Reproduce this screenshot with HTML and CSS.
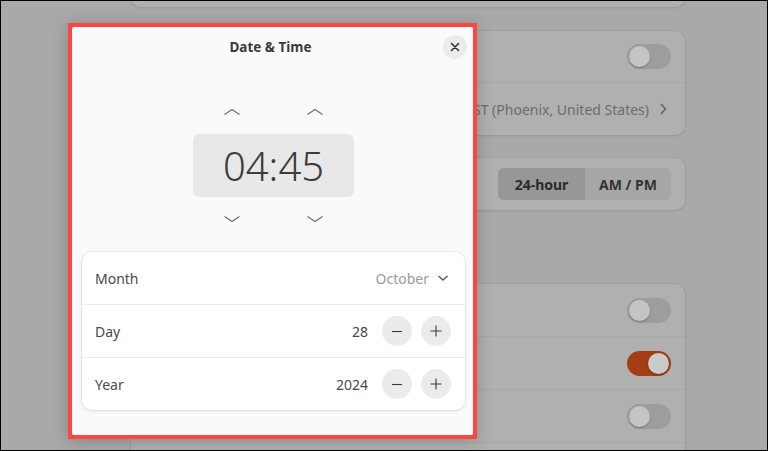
FILE: index.html
```html
<!DOCTYPE html>
<html lang="en">
<head>
<meta charset="utf-8">
<title>Date &amp; Time</title>
<link rel="stylesheet" href="styles.css">
</head>
<body>
<div class="screen">
  <div class="backdrop">
    <div class="cards">
      <section class="card card-top"></section>
      <section class="card card-auto">
        <div class="brow brow-first">
          <span class="grow"></span>
          <span class="switch"><span class="knob"></span></span>
        </div>
        <div class="brow">
          <span class="grow"></span>
          <span class="tz">MST (Phoenix, United States)</span>
          <svg class="tz-chev" width="8" height="12" viewBox="0 0 8 12"><polyline points="2,1 6.5,6 2,11" fill="none" stroke="#5e5e5e" stroke-width="1.3"/></svg>
        </div>
      </section>
      <section class="card card-format">
        <div class="brow brow-first">
          <span class="grow"></span>
          <div class="seg">
            <span class="seg-btn seg-active">24-hour</span>
            <span class="seg-btn">AM / PM</span>
          </div>
        </div>
      </section>
      <section class="card card-switches">
        <div class="brow brow-tall brow-first"><span class="grow"></span><span class="switch"><span class="knob"></span></span></div>
        <div class="brow brow-tall"><span class="grow"></span><span class="switch switch-on"><span class="knob"></span></span></div>
        <div class="brow brow-tall"><span class="grow"></span><span class="switch"><span class="knob"></span></span></div>
        <div class="brow brow-tall"><span class="grow"></span></div>
      </section>
    </div>
  </div>

  <div class="dialog-frame">
    <div class="dialog">
      <header class="dlg-header">
        <span></span>
        <h1 class="dlg-title">Date &amp; Time</h1>
        <button class="close-btn" aria-label="Close">
          <svg width="10" height="10" viewBox="0 0 10 10"><path d="M1.5 1.5 L8.5 8.5 M8.5 1.5 L1.5 8.5" stroke="#2e2e2e" stroke-width="1.5" stroke-linecap="round"/></svg>
        </button>
      </header>

      <div class="time-area">
        <div class="chev-row">
          <button class="chev-btn"><svg width="18" height="8" viewBox="0 0 18 8"><polyline points="1.5,6.5 9,1.5 16.5,6.5" fill="none" stroke="#6f6f6f" stroke-width="1.2"/></svg></button>
          <button class="chev-btn"><svg width="18" height="8" viewBox="0 0 18 8"><polyline points="1.5,6.5 9,1.5 16.5,6.5" fill="none" stroke="#6f6f6f" stroke-width="1.2"/></svg></button>
        </div>
        <div class="time-box">04:45</div>
        <div class="chev-row">
          <button class="chev-btn"><svg width="18" height="8" viewBox="0 0 18 8"><polyline points="1.5,1.5 9,6.5 16.5,1.5" fill="none" stroke="#6f6f6f" stroke-width="1.2"/></svg></button>
          <button class="chev-btn"><svg width="18" height="8" viewBox="0 0 18 8"><polyline points="1.5,1.5 9,6.5 16.5,1.5" fill="none" stroke="#6f6f6f" stroke-width="1.2"/></svg></button>
        </div>
      </div>

      <div class="date-card">
        <div class="drow">
          <span class="dlabel">Month</span>
          <span class="grow"></span>
          <span class="month-val">October</span>
          <svg class="month-chev" width="14" height="8" viewBox="0 0 14 8"><polyline points="2.5,2 7,6 11.5,2" fill="none" stroke="#5a5a5a" stroke-width="1.5"/></svg>
        </div>
        <div class="drow">
          <span class="dlabel">Day</span>
          <span class="grow"></span>
          <span class="dval">28</span>
          <button class="step-btn" aria-label="Decrease"><svg width="12" height="12" viewBox="0 0 12 12"><path d="M1 6.5 H11" stroke="#3a3a3a" stroke-width="1.1"/></svg></button>
          <button class="step-btn" aria-label="Increase"><svg width="12" height="12" viewBox="0 0 12 12"><path d="M0.5 6 H11.5 M6 0.5 V11.5" stroke="#3a3a3a" stroke-width="1.1"/></svg></button>
        </div>
        <div class="drow">
          <span class="dlabel">Year</span>
          <span class="grow"></span>
          <span class="dval">2024</span>
          <button class="step-btn" aria-label="Decrease"><svg width="12" height="12" viewBox="0 0 12 12"><path d="M1 6.5 H11" stroke="#3a3a3a" stroke-width="1.1"/></svg></button>
          <button class="step-btn" aria-label="Increase"><svg width="12" height="12" viewBox="0 0 12 12"><path d="M0.5 6 H11.5 M6 0.5 V11.5" stroke="#3a3a3a" stroke-width="1.1"/></svg></button>
        </div>
      </div>
    </div>
  </div>
</div>
</body>
</html>
```

FILE: styles.css
```css
* { box-sizing: border-box; }

html, body {
  margin: 0;
  padding: 0;
  background: #a9a9a9;
}

body {
  font-family: "Noto Sans", "Open Sans", "DejaVu Sans", sans-serif;
  font-size: 14px;
}

button {
  font: inherit;
  border: 0;
  padding: 0;
  margin: 0;
  background: none;
}

.screen {
  position: relative;
  width: 768px;
  height: 451px;
  overflow: hidden;
  border: 1px solid #000;
  background: #a9a9a9;
}

/* ---------- dimmed background window ---------- */
.backdrop {
  width: 100%;
  height: 100%;
}

.cards {
  width: 554px;
  margin-left: 130px;
  margin-top: -41px;
  display: flex;
  flex-direction: column;
}

.card {
  background: #b0b0b0;
  border-radius: 10px;
  box-shadow: 0 0 0 1px rgba(0, 0, 0, 0.035), 0 1px 3px rgba(0, 0, 0, 0.08);
}

.card-top { height: 47px; }
.card-auto { margin-top: 24px; }
.card-format { margin-top: 23px; }
.card-switches { margin-top: 74px; }

.brow {
  height: 53px;
  display: flex;
  align-items: center;
  padding: 0 14px;
  border-top: 1px solid rgba(0, 0, 0, 0.045);
}

.brow-first {
  height: 52px;
  border-top: 0;
}

.card-auto .brow-first { height: 51px; }

.brow-tall { height: 53px; }
.card-switches .brow-first { height: 52px; }

.grow { flex: 1; }

.switch {
  position: relative;
  width: 44px;
  height: 25px;
  border-radius: 13px;
  background: #9d9d9d;
}

.switch .knob {
  position: absolute;
  top: 2px;
  left: 2px;
  width: 21px;
  height: 21px;
  border-radius: 50%;
  background: #c4c4c4;
  box-shadow: 0 1px 2px rgba(0, 0, 0, 0.25);
}

.switch-on { background: #a43c16; }
.switch-on .knob {
  left: 21px;
  background: #cacaca;
}

.tz {
  color: #6c6c6c;
  font-size: 14px;
  white-space: nowrap;
}

.tz-chev {
  margin-left: 10px;
  margin-right: 4px;
}

.seg {
  display: flex;
  height: 32px;
  border-radius: 6px;
  overflow: hidden;
}

.seg-btn {
  width: 86px;
  display: flex;
  align-items: center;
  justify-content: center;
  font-weight: 700;
  color: #333;
  background: #a6a6a6;
}

.seg-active {
  width: 87px;
  background: #979797;
  color: #2a2a2a;
}

/* ---------- dialog ---------- */
.dialog-frame {
  position: absolute;
  left: 67px;
  top: 22px;
  width: 409px;
  height: 416px;
  border: 4px solid #ff4444;
  box-shadow: 0 2px 16px rgba(0, 0, 0, 0.22);
  background: #a0a0a0;
}

.dialog {
  height: 100%;
  background: #fafafa;
  border-radius: 2px;
  display: flex;
  flex-direction: column;
}

.dlg-header {
  height: 40px;
  display: grid;
  grid-template-columns: 1fr auto 1fr;
  align-items: center;
  padding: 0 6px 0 0;
}

.dlg-title {
  margin: 0;
  font-size: 13.5px;
  font-weight: 700;
  color: #3a3a3a;
  padding-left: 2px;
}

.close-btn {
  justify-self: end;
  width: 24px;
  height: 24px;
  border-radius: 50%;
  background: #ebebeb;
  display: flex;
  align-items: center;
  justify-content: center;
}

.time-area {
  margin-top: 33px;
  display: flex;
  flex-direction: column;
  align-items: center;
  gap: 10px;
}

.chev-row {
  display: flex;
  gap: 51px;
  padding-left: 2px;
}

.chev-btn {
  width: 32px;
  height: 24px;
  display: flex;
  align-items: center;
  justify-content: center;
}

.time-box {
  width: 161px;
  height: 63px;
  margin-left: 2px;
  border-radius: 6px;
  background: #e8e8e8;
  color: #3c3c3c;
  font-size: 40px;
  font-weight: 300;
  line-height: 63px;
  text-align: center;
}

.date-card {
  margin: 21px 8px 0 10px;
  background: #ffffff;
  border-radius: 10px;
  box-shadow: 0 0 0 1px rgba(0, 0, 0, 0.03), 0 1px 4px rgba(0, 0, 0, 0.1);
}

.drow {
  height: 53px;
  display: flex;
  align-items: center;
  padding: 0 14px 0 13px;
  border-top: 1px solid #ececec;
}

.drow:first-child {
  height: 52px;
  border-top: 0;
}

.dlabel { color: #4a4a4a; }

.month-val { color: #9b9b9b; }

.month-chev { margin-left: 7px; margin-right: 1px; }

.dval {
  color: #4a4a4a;
  margin-right: 14px;
}

.step-btn {
  width: 30px;
  height: 30px;
  border-radius: 50%;
  background: #ebebeb;
  display: flex;
  align-items: center;
  justify-content: center;
}

.step-btn + .step-btn { margin-left: 9px; }
```
